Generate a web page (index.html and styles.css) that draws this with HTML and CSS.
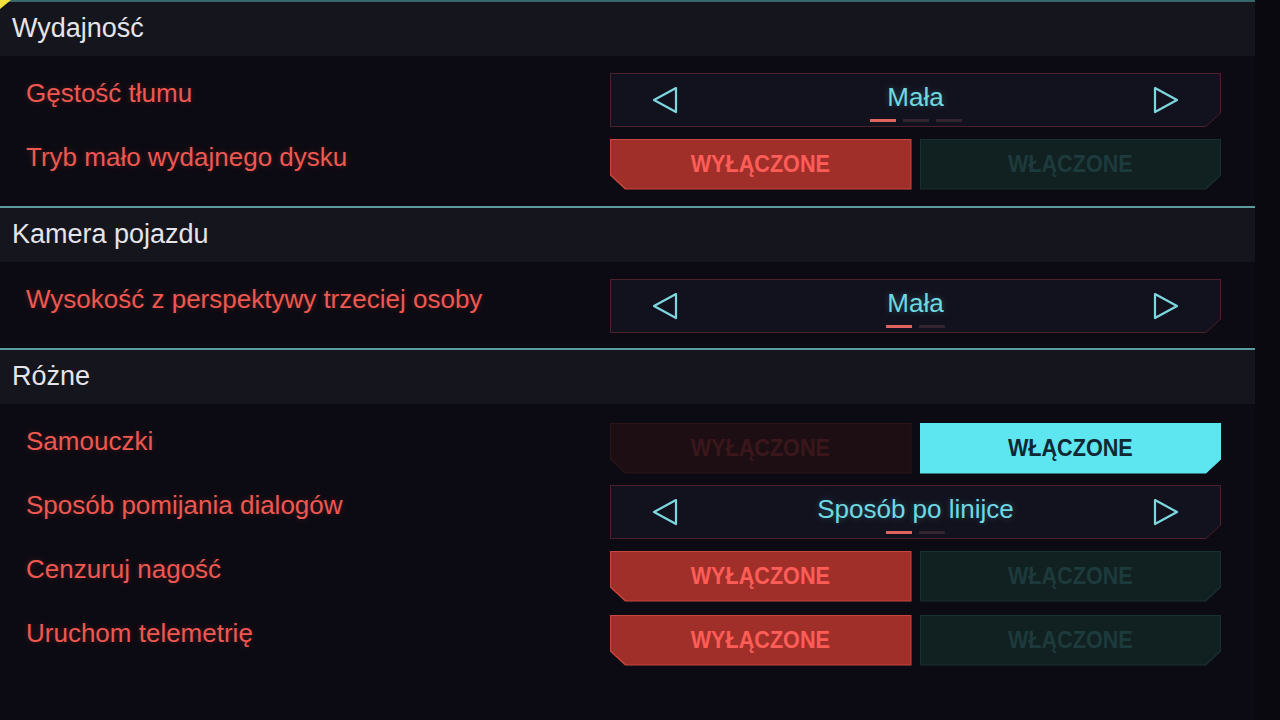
FILE: index.html
```html
<!DOCTYPE html>
<html lang="pl">
<head>
<meta charset="utf-8">
<title>Ustawienia – Gra</title>
<link rel="stylesheet" href="styles.css">
</head>
<body>
<div class="screen">
  <div class="panel">
    <div class="topline"><span class="corner"></span></div>

    <section class="group">
      <h2 class="group-title">Wydajność</h2>
      <div class="rows">
        <div class="row">
          <span class="label">Gęstość tłumu</span>
          <div class="selector">
            <div class="selector-fill">
              <svg class="arrow" viewBox="0 0 28 30"><polygon points="25,3 3,15 25,27"/></svg>
              <div class="value">
                <span class="value-text">Mała</span>
                <div class="pips"><i class="on"></i><i></i><i></i></div>
              </div>
              <svg class="arrow" viewBox="0 0 28 30"><polygon points="3,3 25,15 3,27"/></svg>
            </div>
          </div>
        </div>
        <div class="row">
          <span class="label">Tryb mało wydajnego dysku</span>
          <div class="toggle">
            <div class="opt opt-off active"><div class="opt-fill"><span class="opt-text">WYŁĄCZONE</span></div></div>
            <div class="opt opt-on"><div class="opt-fill"><span class="opt-text">WŁĄCZONE</span></div></div>
          </div>
        </div>
      </div>
    </section>

    <section class="group">
      <h2 class="group-title">Kamera pojazdu</h2>
      <div class="rows">
        <div class="row">
          <span class="label">Wysokość z perspektywy trzeciej osoby</span>
          <div class="selector">
            <div class="selector-fill">
              <svg class="arrow" viewBox="0 0 28 30"><polygon points="25,3 3,15 25,27"/></svg>
              <div class="value">
                <span class="value-text">Mała</span>
                <div class="pips"><i class="on"></i><i></i></div>
              </div>
              <svg class="arrow" viewBox="0 0 28 30"><polygon points="3,3 25,15 3,27"/></svg>
            </div>
          </div>
        </div>
      </div>
    </section>

    <section class="group">
      <h2 class="group-title">Różne</h2>
      <div class="rows">
        <div class="row">
          <span class="label">Samouczki</span>
          <div class="toggle">
            <div class="opt opt-off"><div class="opt-fill"><span class="opt-text">WYŁĄCZONE</span></div></div>
            <div class="opt opt-on active"><div class="opt-fill"><span class="opt-text">WŁĄCZONE</span></div></div>
          </div>
        </div>
        <div class="row">
          <span class="label">Sposób pomijania dialogów</span>
          <div class="selector">
            <div class="selector-fill">
              <svg class="arrow" viewBox="0 0 28 30"><polygon points="25,3 3,15 25,27"/></svg>
              <div class="value">
                <span class="value-text">Sposób po linijce</span>
                <div class="pips"><i class="on"></i><i></i></div>
              </div>
              <svg class="arrow" viewBox="0 0 28 30"><polygon points="3,3 25,15 3,27"/></svg>
            </div>
          </div>
        </div>
        <div class="row">
          <span class="label">Cenzuruj nagość</span>
          <div class="toggle">
            <div class="opt opt-off active"><div class="opt-fill"><span class="opt-text">WYŁĄCZONE</span></div></div>
            <div class="opt opt-on"><div class="opt-fill"><span class="opt-text">WŁĄCZONE</span></div></div>
          </div>
        </div>
        <div class="row">
          <span class="label">Uruchom telemetrię</span>
          <div class="toggle">
            <div class="opt opt-off active"><div class="opt-fill"><span class="opt-text">WYŁĄCZONE</span></div></div>
            <div class="opt opt-on"><div class="opt-fill"><span class="opt-text">WŁĄCZONE</span></div></div>
          </div>
        </div>
      </div>
    </section>
  </div>
</div>
</body>
</html>
```

FILE: styles.css
```css
html, body {
  margin: 0;
  padding: 0;
}

body {
  width: 1280px;
  height: 720px;
  overflow: hidden;
  background: #09090f;
  font-family: "Liberation Sans", Arial, sans-serif;
}

.screen {
  display: flex;
  height: 720px;
}

.panel {
  width: 1255px;
  background: #0c0b13;
}

/* thin rule along the top with the small yellow corner mark */
.topline {
  position: relative;
  height: 2px;
  background: #37676b;
}

.corner {
  position: absolute;
  left: 0;
  top: 0;
  width: 11px;
  height: 9px;
  background: #f2e13c;
  clip-path: polygon(0 0, 100% 0, 0 100%);
}

.group + .group {
  border-top: 2px solid #5b9c9f;
}

.group-title {
  margin: 0;
  height: 54px;
  display: flex;
  align-items: center;
  padding-left: 12px;
  padding-bottom: 2px;
  box-sizing: border-box;
  background: #15151e;
  color: #e4e4ea;
  font-size: 27px;
  font-weight: normal;
}

.rows {
  padding: 12px 0 10px;
}

.row {
  height: 64px;
  display: flex;
  align-items: center;
  padding-left: 26px;
  padding-right: 34px;
}

.label {
  flex: 1;
  color: #ee5850;
  font-size: 26px;
  padding-bottom: 14px;
  text-shadow: 0 0 6px rgba(255, 80, 70, 0.25);
}

/* left/right value selector */
.selector {
  width: 611px;
  height: 54px;
  padding: 1px;
  box-sizing: border-box;
  background: #4e1f2c;
  clip-path: polygon(0 0, 100% 0, 100% calc(100% - 14px), calc(100% - 15px) 100%, 0 100%);
}

.selector-fill {
  height: 100%;
  display: flex;
  align-items: center;
  justify-content: space-between;
  padding: 4px 40px 0 40px;
  box-sizing: border-box;
  background: #12121e;
  clip-path: polygon(0 0, 100% 0, 100% calc(100% - 13px), calc(100% - 14px) 100%, 0 100%);
}

.arrow {
  width: 28px;
  height: 30px;
  margin-bottom: 4px;
}

.arrow polygon {
  fill: none;
  stroke: #7cd8de;
  stroke-width: 2.2;
  stroke-linejoin: round;
}

.value {
  display: flex;
  flex-direction: column;
  align-items: center;
}

.value-text {
  color: #6fd9e1;
  font-size: 26px;
  line-height: 30px;
  text-shadow: 0 0 6px rgba(110, 220, 230, 0.3);
}

.pips {
  display: flex;
  gap: 7px;
  margin-top: 7px;
}

.pips i {
  width: 26px;
  height: 3px;
  background: #33242f;
}

.pips i.on {
  background: #e2625d;
}

/* two-state on/off switch */
.toggle {
  width: 611px;
  height: 51px;
  display: flex;
  gap: 8px;
}

.opt {
  flex: 1;
  padding: 1px;
  box-sizing: border-box;
}

.opt-fill {
  height: 100%;
  display: flex;
  align-items: center;
  justify-content: center;
  box-sizing: border-box;
}

/* condensed bold caption */
.opt-text {
  display: inline-block;
  font-weight: bold;
  font-size: 24px;
  transform: scaleX(0.9);
}

.opt-off,
.opt-off .opt-fill {
  clip-path: polygon(0 0, 100% 0, 100% 100%, 15px 100%, 0 calc(100% - 14px));
}

.opt-on,
.opt-on .opt-fill {
  clip-path: polygon(0 0, 100% 0, 100% calc(100% - 14px), calc(100% - 15px) 100%, 0 100%);
}

.opt-off {
  background: #2b1519;
}

.opt-off .opt-fill {
  background: #1d0e13;
  color: #3b171b;
}

.opt-off.active {
  background: #c9473f;
}

.opt-off.active .opt-fill {
  background: #a02f2a;
  color: #ff5d57;
}

.opt-on {
  background: #18302f;
}

.opt-on .opt-fill {
  background: #112121;
  color: #1d3a3c;
}

.opt-on.active {
  background: #5de6f0;
}

.opt-on.active .opt-fill {
  background: #5de6f0;
  color: #0f2833;
}
```
